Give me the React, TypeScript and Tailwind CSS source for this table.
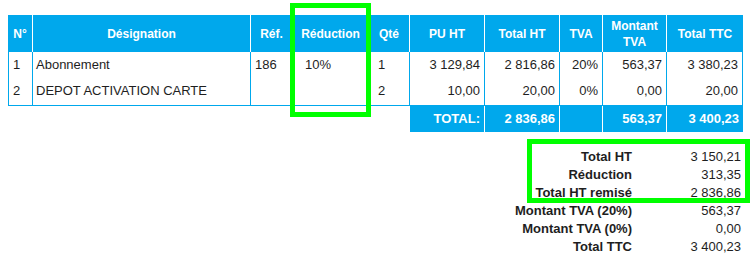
import React from "react";

const blue = "bg-[#00a8ec]";
const headCols =
  "grid grid-cols-[24px_217px_41px_75px_40px_74px_74px_42px_63px_76px] gap-x-px";
const bodyCols =
  "grid grid-cols-[23px_217px_41px_75px_40px_74px_74px_42px_63px_75px] gap-x-px";

type Line = {
  n: string;
  designation: string;
  ref: string;
  reduction: string;
  qty: string;
  pu: string;
  totalHt: string;
  tva: string;
  montantTva: string;
  totalTtc: string;
};

const lines: Line[] = [
  {
    n: "1",
    designation: "Abonnement",
    ref: "186",
    reduction: "10%",
    qty: "1",
    pu: "3 129,84",
    totalHt: "2 816,86",
    tva: "20%",
    montantTva: "563,37",
    totalTtc: "3 380,23",
  },
  {
    n: "2",
    designation: "DEPOT ACTIVATION CARTE",
    ref: "",
    reduction: "",
    qty: "2",
    pu: "10,00",
    totalHt: "20,00",
    tva: "0%",
    montantTva: "0,00",
    totalTtc: "20,00",
  },
];

const summary: [string, string][] = [
  ["Total HT", "3 150,21"],
  ["Réduction", "313,35"],
  ["Total HT remisé", "2 836,86"],
  ["Montant TVA (20%)", "563,37"],
  ["Montant TVA (0%)", "0,00"],
  ["Total TTC", "3 400,23"],
];

function Head({ children }: { children: React.ReactNode }) {
  return (
    <div
      className={`${blue} flex items-center justify-center text-center text-[12px] font-bold leading-[16px] text-white`}
    >
      {children}
    </div>
  );
}

function Cell({
  children,
  right,
  pad = "pl-1",
}: {
  children?: React.ReactNode;
  right?: boolean;
  pad?: string;
}) {
  return (
    <div
      className={`flex items-center bg-white ${
        right ? "justify-end pr-1" : pad
      } whitespace-nowrap`}
    >
      {children}
    </div>
  );
}

export default function App() {
  return (
    <div
      className="relative h-[261px] w-[751px] overflow-hidden bg-white text-[13px] text-[#1e1e1e]"
      style={{ fontFamily: '"Liberation Sans", Arial, Helvetica, sans-serif' }}
    >
      <div className="ml-[8px] w-[735px] pt-[15px]">
        {/* header */}
        <div className={`${headCols} h-[37px]`}>
          <Head>N°</Head>
          <Head>Désignation</Head>
          <Head>Réf.</Head>
          <Head>Réduction</Head>
          <Head>Qté</Head>
          <Head>PU HT</Head>
          <Head>Total HT</Head>
          <Head>TVA</Head>
          <Head>
            Montant
            <br />
            TVA
          </Head>
          <Head>Total TTC</Head>
        </div>

        {/* lines */}
        <div
          className={`${bodyCols} ${blue} grid-rows-[25px_28px] border-x border-b border-[#00a8ec]`}
        >
          {lines.map((l) => (
            <React.Fragment key={l.n}>
              <Cell pad="pl-[4px]">{l.n}</Cell>
              <Cell pad="pl-[3px]">{l.designation}</Cell>
              <Cell pad="pl-[4px]">{l.ref}</Cell>
              <Cell pad="pl-[12px]">{l.reduction}</Cell>
              <Cell pad="pl-[9px]">{l.qty}</Cell>
              <Cell right>{l.pu}</Cell>
              <Cell right>{l.totalHt}</Cell>
              <Cell right>{l.tva}</Cell>
              <Cell right>{l.montantTva}</Cell>
              <Cell right>{l.totalTtc}</Cell>
            </React.Fragment>
          ))}
        </div>

        {/* totals row */}
        <div className={`${headCols} h-[26px] font-bold text-white`}>
          <div className="col-span-5" />
          <div className={`${blue} flex items-center justify-end pr-1`}>TOTAL:</div>
          <div className={`${blue} flex items-center justify-end pr-1`}>2 836,86</div>
          <div className={blue} />
          <div className={`${blue} flex items-center justify-end pr-1`}>563,37</div>
          <div className={`${blue} flex items-center justify-end pr-1`}>3 400,23</div>
        </div>
      </div>

      {/* summary */}
      <div className="mt-[16px] flex justify-end pr-[10px]">
        <div className="grid grid-cols-[auto_109px] leading-[18px]">
          {summary.map(([label, value]) => (
            <React.Fragment key={label}>
              <div className="text-right font-bold">{label}</div>
              <div className="text-right">{value}</div>
            </React.Fragment>
          ))}
        </div>
      </div>

      {/* highlight frames */}
      <div className="pointer-events-none absolute left-[290px] top-[3px] h-[114px] w-[81px] border-[5px] border-[#00ff00]" />
      <div className="pointer-events-none absolute left-[527px] top-[139px] h-[64px] w-[223px] border-[5px] border-[#00ff00]" />
    </div>
  );
}
